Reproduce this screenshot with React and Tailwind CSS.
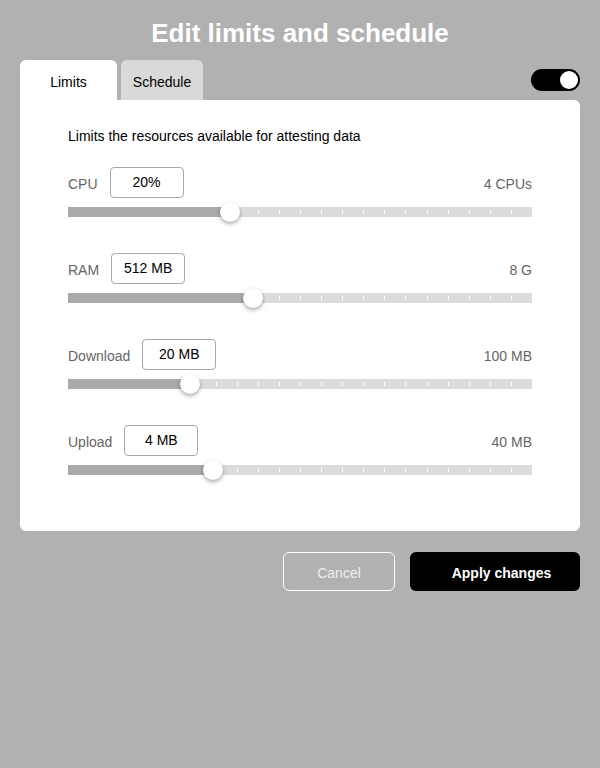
import { useState } from 'react'

const LIMITS = [
  { label: 'CPU', value: '20%', max: '4 CPUs', pos: 0.349 },
  { label: 'RAM', value: '512 MB', max: '8 G', pos: 0.399 },
  { label: 'Download', value: '20 MB', max: '100 MB', pos: 0.263 },
  { label: 'Upload', value: '4 MB', max: '40 MB', pos: 0.312 },
]

const TICKS = Array.from({ length: 21 }, (_, i) => i + 1)

function Slider({ pos }) {
  const pct = `${pos * 100}%`
  return (
    <div className="relative mt-[10px] h-[10px] w-full bg-[#dcdcdc]">
      {TICKS.map((t) => (
        <div
          key={t}
          className="absolute top-[3px] h-[4px] w-px bg-white"
          style={{ left: `${(t / 22) * 100}%` }}
        ></div>
      ))}
      <div className="absolute inset-y-0 left-0 bg-[#aaaaaa]" style={{ width: pct }}></div>
      <div
        className="absolute top-1/2 h-[20px] w-[20px] -translate-x-1/2 -translate-y-1/2 rounded-full bg-white shadow-[0_2px_4px_rgba(0,0,0,0.35)]"
        style={{ left: pct }}
      ></div>
    </div>
  )
}

function LimitRow({ label, value, max, pos }) {
  return (
    <div>
      <div className="flex h-[30px] items-center">
        <span className="pt-[3px] text-sm text-[#666666]">{label}</span>
        <div className="ml-3 flex h-[31px] w-[74px] items-center justify-center rounded border border-[#a8a8a8] text-sm text-black">
          {value}
        </div>
        <span className="ml-auto pt-[3px] text-sm text-[#666666]">{max}</span>
      </div>
      <Slider pos={pos} />
    </div>
  )
}

export default function App() {
  const [tab, setTab] = useState('limits')

  return (
    <div className="h-[768px] w-[600px] bg-[#b1b1b1] px-5 font-['Liberation_Sans',Arial,sans-serif]">
      <h1 className="pt-[17px] text-center text-[26px] font-bold leading-[32px] text-white">
        Edit limits and schedule
      </h1>

      <div className="mt-[11px] flex items-end">
        <button
          onClick={() => setTab('limits')}
          className={`flex h-[40px] w-[97px] items-center justify-center rounded-t-md pt-1 text-sm text-black ${
            tab === 'limits' ? 'bg-white' : 'bg-[#d9d9d9]'
          }`}
        >
          Limits
        </button>
        <button
          onClick={() => setTab('schedule')}
          className={`ml-1 flex h-[40px] w-[82px] items-center justify-center rounded-t-md pt-1 text-sm text-black ${
            tab === 'schedule' ? 'bg-white' : 'bg-[#d9d9d9]'
          }`}
        >
          Schedule
        </button>
        {/* enabled toggle */}
        <div className="mb-[9px] ml-auto flex h-[22px] w-[49px] items-center justify-end rounded-full bg-black pr-[2px]">
          <div className="h-[18px] w-[18px] rounded-full bg-white"></div>
        </div>
      </div>

      <div className="rounded-b-md rounded-tr-md bg-white px-12 pb-[56px] pt-[26px]">
        <p className="text-sm leading-5 text-black">Limits the resources available for attesting data</p>
        <div className="mt-[21px] flex flex-col gap-[36px]">
          {LIMITS.map((l) => (
            <LimitRow key={l.label} {...l} />
          ))}
        </div>
      </div>

      <div className="mt-[21px] flex justify-end gap-[15px]">
        <button className="flex h-[39px] w-[112px] items-center justify-center rounded-md border border-white pt-[2px] text-sm text-[#eeeeee]">
          Cancel
        </button>
        <button className="flex h-[39px] w-[170px] items-center justify-center rounded-md bg-black pl-[13px] pt-[2px] text-sm font-bold text-white">
          Apply changes
        </button>
      </div>
    </div>
  )
}
